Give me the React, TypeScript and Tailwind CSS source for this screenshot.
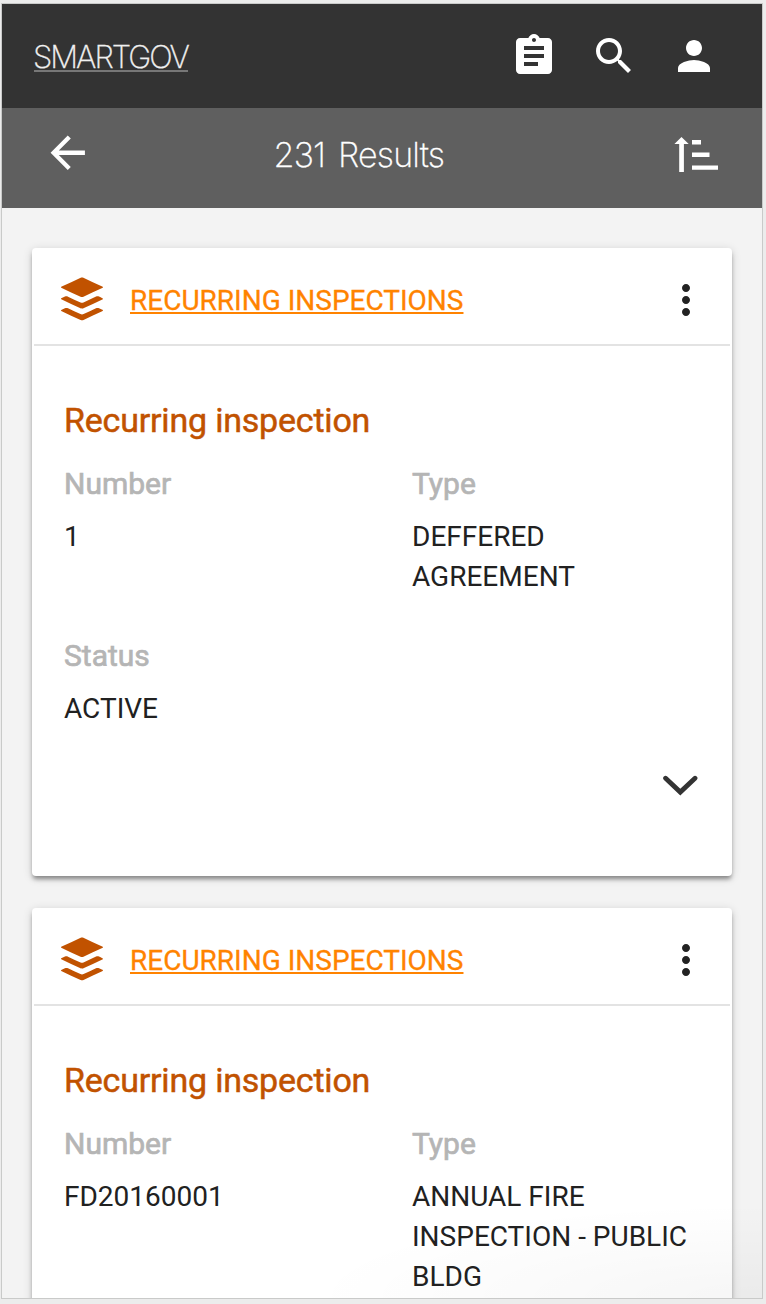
import type { ReactNode } from "react";

type Field = { label: string; value: string };

const records: Field[][] = [
  [
    { label: "Number", value: "1" },
    { label: "Type", value: "DEFFERED AGREEMENT" },
    { label: "Status", value: "ACTIVE" },
  ],
  [
    { label: "Number", value: "FD20160001" },
    { label: "Type", value: "ANNUAL FIRE INSPECTION - PUBLIC BLDG" },
  ],
];

function Icon({ className, children }: { className: string; children: ReactNode }) {
  return (
    <svg viewBox="0 0 24 24" fill="currentColor" className={className}>
      {children}
    </svg>
  );
}

function BufferIcon() {
  return (
    <Icon className="mt-0.5 size-14 shrink-0 text-[#c15200]">
      <path d="M12.6,2.86C15.27,4.1 18,5.39 20.66,6.63C20.81,6.7 21,6.75 21,6.95C21,7.15 20.81,7.19 20.66,7.26C18,8.5 15.3,9.77 12.62,11C12.21,11.21 11.79,11.21 11.38,11C8.69,9.76 6,8.5 3.32,7.25C3.18,7.19 3,7.14 3,6.94C3,6.76 3.18,6.71 3.31,6.65C6,5.39 8.74,4.1 11.44,2.85C11.73,2.72 12.3,2.73 12.6,2.86Z" />
      <path d="M12,21.15C11.8,21.15 11.66,21.11 11.38,20.97C8.69,19.73 6,18.47 3.33,17.22C3.19,17.15 3,17.11 3,16.9C3,16.7 3.19,16.66 3.34,16.59C3.78,16.38 4.23,16.17 4.67,15.96C5.12,15.76 5.56,15.76 6,15.97C7.79,16.8 9.57,17.63 11.35,18.46C11.79,18.67 12.23,18.66 12.67,18.46C14.45,17.62 16.23,16.79 18,15.96C18.44,15.76 18.87,15.75 19.29,15.95C19.77,16.16 20.24,16.39 20.71,16.61C20.78,16.64 20.85,16.68 20.91,16.73C21.04,16.83 21.04,17 20.91,17.08C20.83,17.14 20.74,17.19 20.65,17.23C18,18.5 15.33,19.72 12.66,20.95C12.46,21.05 12.19,21.15 12,21.15Z" />
      <path d="M12,16.17C11.9,16.17 11.55,16.07 11.36,16C8.68,14.74 6,13.5 3.34,12.24C3.2,12.18 3,12.13 3,11.93C3,11.72 3.2,11.68 3.35,11.61C3.8,11.39 4.25,11.18 4.7,10.97C5.13,10.78 5.56,10.78 6,11C7.78,11.82 9.58,12.66 11.38,13.5C11.79,13.69 12.21,13.69 12.63,13.5C14.43,12.65 16.23,11.81 18.04,10.97C18.45,10.78 18.87,10.78 19.29,10.97C19.76,11.19 20.24,11.41 20.71,11.63C20.77,11.66 20.84,11.69 20.9,11.74C21.04,11.85 21.04,12 20.89,12.12C20.84,12.16 20.77,12.19 20.71,12.22C18,13.5 15.31,14.75 12.61,16C12.42,16.09 12.08,16.17 12,16.17Z" />
    </Icon>
  );
}

function TopBar() {
  return (
    <header className="flex h-[104px] shrink-0 items-center justify-between bg-[#333333] pr-11 pl-8 text-white">
      <a className="border-b-2 border-[#777777] pt-[3px] font-['Inter'] text-[31px] leading-[27px] font-extralight tracking-[-2px] text-[#f0f0f0] indent-[-1px] [-webkit-text-stroke:0.3px_currentColor]">
        SMARTGOV
      </a>
      <nav className="flex gap-8">
        <Icon className="size-12">
          <path d="M19 3h-4.18C14.4 1.84 13.3 1 12 1c-1.3 0-2.4.84-2.82 2H5c-1.1 0-2 .9-2 2v14c0 1.1.9 2 2 2h14c1.1 0 2-.9 2-2V5c0-1.1-.9-2-2-2zm-7 0c.55 0 1 .45 1 1s-.45 1-1 1-1-.45-1-1 .45-1 1-1zm2 14H7v-2h7v2zm3-4H7v-2h10v2zm0-4H7V7h10v2z" />
        </Icon>
        <Icon className="size-12">
          <path d="M15.5 14h-.79l-.28-.27C15.41 12.59 16 11.11 16 9.5 16 5.91 13.09 3 9.5 3S3 5.91 3 9.5 5.91 16 9.5 16c1.61 0 3.09-.59 4.23-1.57l.27.28v.79l5 4.99L20.49 19l-4.99-5zm-6 0C7.01 14 5 11.99 5 9.5S7.01 5 9.5 5 14 7.01 14 9.5 11.99 14 9.5 14z" />
        </Icon>
        <Icon className="size-12">
          <path d="M12 12c2.21 0 4-1.79 4-4s-1.79-4-4-4-4 1.79-4 4 1.79 4 4 4zm0 2c-2.67 0-8 1.34-8 4v2h16v-2c0-2.66-5.33-4-8-4z" />
        </Icon>
      </nav>
    </header>
  );
}

function ResultsBar() {
  return (
    <div className="flex h-[100px] shrink-0 items-center bg-[#5f5f5f] pr-11 pl-10 text-white">
      <Icon className="mb-[11px] size-[51.5px]">
        <path d="M20 11H7.83l5.59-5.59L12 4l-8 8 8 8 1.41-1.41L7.83 13H20v-2z" />
      </Icon>
      <h1 className="mb-1.5 ml-[180px] font-['Inter'] text-[34px] leading-10 font-extralight tracking-[-0.8px] [word-spacing:4px] [-webkit-text-stroke:0.3px_currentColor]">
        231 Results
      </h1>
      <svg viewBox="0 0 44 36" fill="currentColor" className="mb-[9px] ml-auto h-9 w-11">
        <path d="M7.5 1 14.7 8H9.9v28H5.2V8H.4z" />
        <path d="M18 4h9v4.4h-9zM18 16.6h17.5V21H18zM18 29.4h26v4.4H18z" />
      </svg>
    </div>
  );
}

function RecordCard({ fields }: { fields: Field[] }) {
  return (
    <section className="flex h-[628px] shrink-0 flex-col rounded-[4px] bg-white px-0.5 shadow-[0_4px_4px_-1px_rgba(0,0,0,0.38),0_2px_10px_rgba(0,0,0,0.16)]">
      <div className="flex h-[98px] items-center border-b-2 border-[#e3e3e3] px-5 pt-1">
        <BufferIcon />
        <a className="mt-[5px] ml-5 text-[28px] leading-10 text-[#ff8300] underline decoration-2 underline-offset-[2px] [-webkit-text-stroke:0.3px_currentColor]">
          RECURRING INSPECTIONS
        </a>
        <Icon className="mt-1 ml-auto size-12 text-[#222222]">
          <path d="M12 8c1.1 0 2-.9 2-2s-.9-2-2-2-2 .9-2 2 .9 2 2 2zm0 2c-1.1 0-2 .9-2 2s.9 2 2 2 2-.9 2-2-.9-2-2-2zm0 6c-1.1 0-2 .9-2 2s.9 2 2 2 2-.9 2-2-.9-2-2-2z" />
        </Icon>
      </div>
      <div className="flex grow flex-col px-[30px] pt-[54px]">
        <h2 className="text-[34px] leading-10 tracking-[-0.2px] text-[#c15200] [-webkit-text-stroke:0.5px_currentColor]">
          Recurring inspection
        </h2>
        <dl className="mt-6 grid grid-cols-[348px_288px] gap-y-[39px]">
          {fields.map((f) => (
            <div key={f.label} className="flex flex-col gap-[13px]">
              <dt className="text-[30px] leading-10 text-[#b5b5b5] [-webkit-text-stroke:0.7px_currentColor]">
                {f.label}
              </dt>
              <dd className="text-[28px] leading-10 text-[#212121]">{f.value}</dd>
            </div>
          ))}
        </dl>
        <svg
          viewBox="0 0 36 22"
          fill="none"
          stroke="#333333"
          strokeWidth="4.8"
          strokeLinecap="round"
          className="mt-[45px] mr-0.5 h-[22px] w-9 self-end"
        >
          <path d="M3.6 4.2 18.3 18.1 33 4.2" />
        </svg>
      </div>
    </section>
  );
}

export default function App() {
  return (
    <div className="h-[1304px] w-[766px] overflow-hidden bg-[#ececec] pt-[3px] pl-px font-['Roboto',sans-serif]">
      <div className="relative flex h-[1296px] w-[762px] flex-col overflow-hidden border border-[#c9cac9] bg-[#f3f3f3]">
        <TopBar />
        <ResultsBar />
        <main className="flex flex-col gap-8 px-[30px] pt-10">
          {records.map((fields) => (
            <RecordCard key={fields[0].value} fields={fields} />
          ))}
        </main>
        <div className="pointer-events-none absolute right-0 bottom-0 h-24 w-[460px] bg-[radial-gradient(ellipse_at_bottom_right,rgba(0,0,0,0.035),transparent_70%)]" />
      </div>
    </div>
  );
}
